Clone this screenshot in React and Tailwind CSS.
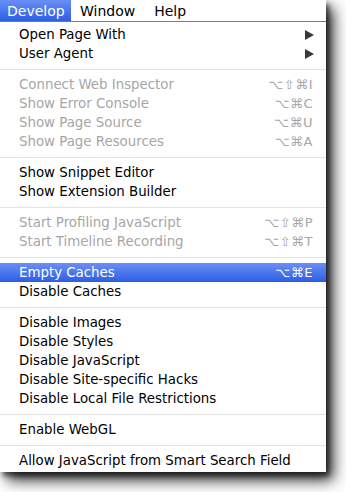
import React from "react";

const groups = [
  [
    { label: "Open Page With", arrow: true },
    { label: "User Agent", arrow: true },
  ],
  [
    { label: "Connect Web Inspector", sc: "⌥⇧⌘I", dis: true },
    { label: "Show Error Console", sc: "⌥⌘C", dis: true },
    { label: "Show Page Source", sc: "⌥⌘U", dis: true },
    { label: "Show Page Resources", sc: "⌥⌘A", dis: true },
  ],
  [
    { label: "Show Snippet Editor" },
    { label: "Show Extension Builder" },
  ],
  [
    { label: "Start Profiling JavaScript", sc: "⌥⇧⌘P", dis: true },
    { label: "Start Timeline Recording", sc: "⌥⇧⌘T", dis: true },
  ],
  [
    { label: "Empty Caches", sc: "⌥⌘E", hi: true },
    { label: "Disable Caches" },
  ],
  [
    { label: "Disable Images" },
    { label: "Disable Styles" },
    { label: "Disable JavaScript" },
    { label: "Disable Site-specific Hacks" },
    { label: "Disable Local File Restrictions" },
  ],
  [{ label: "Enable WebGL" }],
  [{ label: "Allow JavaScript from Smart Search Field" }],
];

function Item({ it }) {
  const color = it.hi
    ? "text-white bg-gradient-to-b from-[#6a8ef4] to-[#2d5de6]"
    : it.dis
    ? "text-[#a6a6a6]"
    : "text-black";
  return (
    <div className={`flex items-center h-[19px] pl-[19px] pr-[13px] ${color}`}>
      <span className="flex-1 whitespace-nowrap">{it.label}</span>
      {it.sc && <span className="tracking-[0.5px] text-[13px] whitespace-nowrap">{it.sc}</span>}
      {it.arrow && (
        <svg width="9" height="10" viewBox="0 0 9 10" className="mr-[-1px]">
          <path d="M0 0 L9 5 L0 10 Z" fill="#3a3a3a" />
        </svg>
      )}
    </div>
  );
}

export default function App() {
  return (
    <div
      className="w-[346px] h-[492px] bg-white overflow-hidden text-[13.35px] leading-none"
      style={{ fontFamily: '"DejaVu Sans", "Liberation Sans", sans-serif' }}
    >
      <div className="w-[326px] bg-white shadow-[7px_8px_14px_rgba(0,0,0,0.85),3px_4px_5px_rgba(0,0,0,0.55)]">
        <div className="h-[22px] flex items-stretch border-b border-[#7a7a7a] text-[14px] bg-white">
          <div className="w-[71px] flex items-center pl-[7px] text-white bg-gradient-to-b from-[#6a8ef4] to-[#2d5de6]">
            Develop
          </div>
          <div className="flex items-center pl-[9px] text-black">Window</div>
          <div className="flex items-center pl-[19px] text-black">Help</div>
        </div>
        <div className="pt-[3px] pb-[2px] bg-white">
          {groups.map((g, gi) => (
            <div key={gi}>
              {gi > 0 && (
                <div className="h-[12px] flex items-center">
                  <div className="w-full h-px bg-[#e2e2e2]" />
                </div>
              )}
              {g.map((it, ii) => (
                <Item key={ii} it={it} />
              ))}
            </div>
          ))}
        </div>
      </div>
    </div>
  );
}
